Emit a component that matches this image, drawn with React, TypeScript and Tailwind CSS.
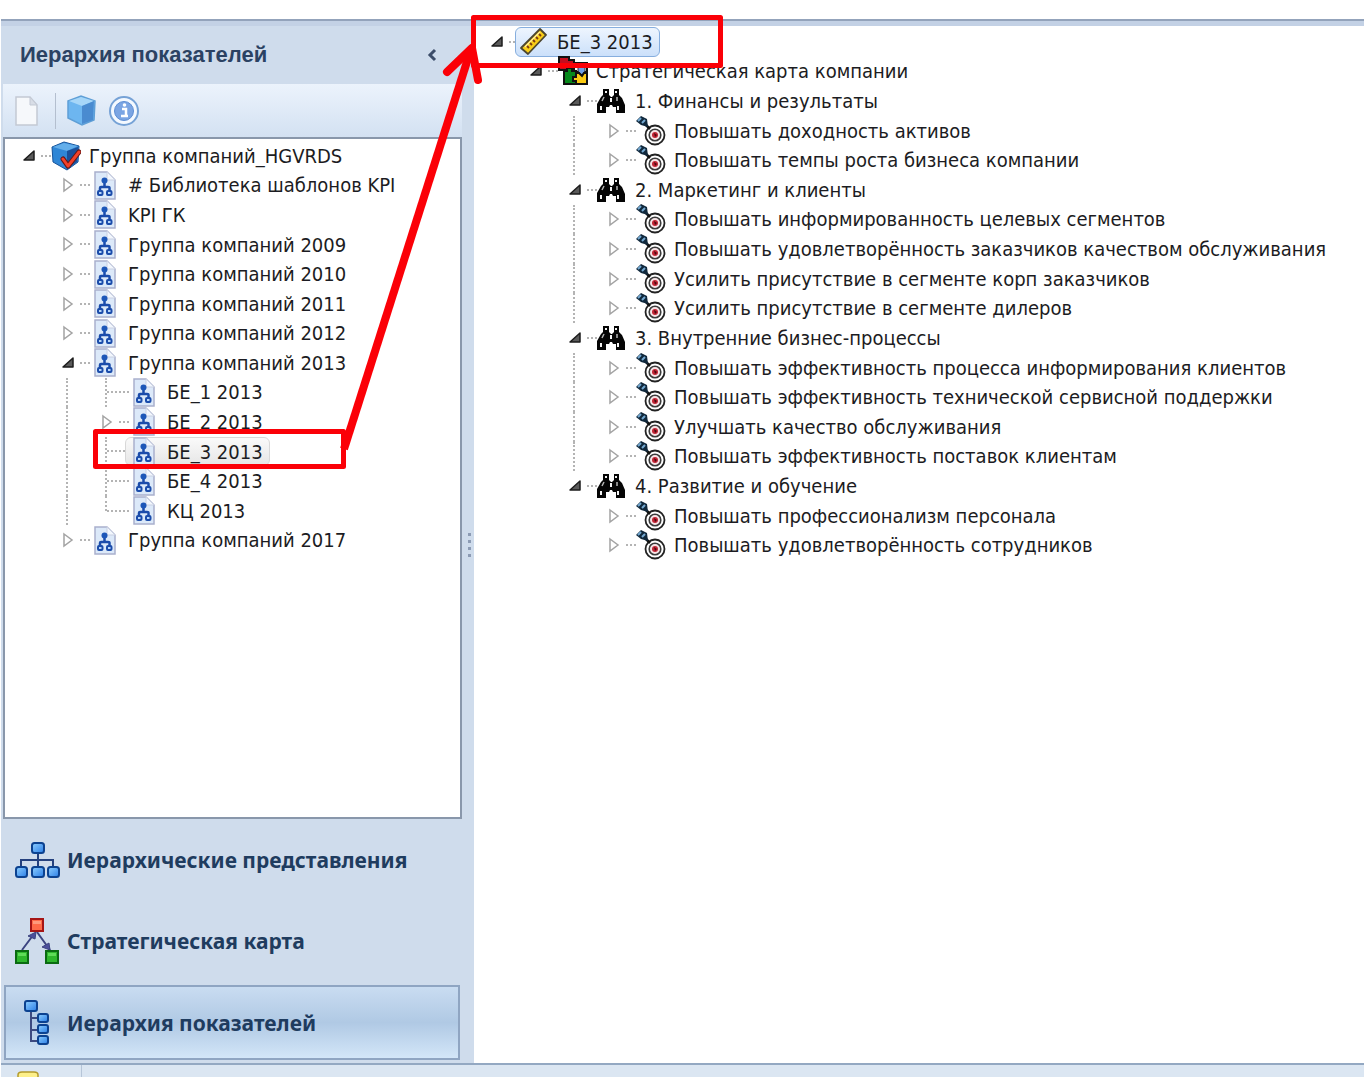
import React, { useState } from 'react';

type IconName = 'group' | 'page' | 'ruler' | 'puzzle' | 'binoculars' | 'target';

interface TreeNode {
  label: string;
  icon: IconName;
  expandable?: boolean;
  open?: boolean;
  children?: TreeNode[];
}

interface Row {
  node: TreeNode;
  guides: boolean[];
  isLast: boolean;
}

const goals = (...labels: string[]): TreeNode[] =>
  labels.map((label) => ({ label, icon: 'target', expandable: true }));

const page = (label: string, expandable = true): TreeNode => ({ label, icon: 'page', expandable });

const COMPANY_TREE: TreeNode = {
  label: 'Группа компаний_HGVRDS',
  icon: 'group',
  open: true,
  children: [
    page('# Библиотека шаблонов KPI'),
    page('KPI ГК'),
    page('Группа компаний 2009'),
    page('Группа компаний 2010'),
    page('Группа компаний 2011'),
    page('Группа компаний 2012'),
    {
      label: 'Группа компаний 2013',
      icon: 'page',
      open: true,
      children: [
        page('БЕ_1 2013', false),
        page('БЕ_2 2013'),
        page('БЕ_3 2013', false),
        page('БЕ_4 2013', false),
        page('КЦ 2013', false),
      ],
    },
    page('Группа компаний 2017'),
  ],
};

const STRATEGY_TREE: TreeNode = {
  label: 'БЕ_3 2013',
  icon: 'ruler',
  open: true,
  children: [
    {
      label: 'Стратегическая карта компании',
      icon: 'puzzle',
      open: true,
      children: [
        {
          label: '1. Финансы и результаты',
          icon: 'binoculars',
          open: true,
          children: goals('Повышать доходность активов', 'Повышать темпы роста бизнеса компании'),
        },
        {
          label: '2. Маркетинг и клиенты',
          icon: 'binoculars',
          open: true,
          children: goals(
            'Повышать информированность целевых сегментов',
            'Повышать удовлетворённость заказчиков качеством обслуживания',
            'Усилить присутствие в сегменте корп заказчиков',
            'Усилить присутствие в сегменте дилеров',
          ),
        },
        {
          label: '3. Внутренние бизнес-процессы',
          icon: 'binoculars',
          open: true,
          children: goals(
            'Повышать эффективность процесса информирования клиентов',
            'Повышать эффективность технической сервисной поддержки',
            'Улучшать качество обслуживания',
            'Повышать эффективность поставок клиентам',
          ),
        },
        {
          label: '4. Развитие и обучение',
          icon: 'binoculars',
          open: true,
          children: goals('Повышать профессионализм персонала', 'Повышать удовлетворённость сотрудников'),
        },
      ],
    },
  ],
};

const GroupIcon = () => (
  <svg width="30" height="30" viewBox="0 0 30 30">
    <path d="M1 6 L13 1 L28 5 L27 21 L16 29 L2 21Z" fill="#2f86d6" stroke="#17549b" strokeWidth="1" />
    <path d="M2 6 L13 2 L27 5 L16 10Z" fill="#63aeea" />
    <path d="M16 10 L27 6 L26 21 L16 28Z" fill="#1b4f99" />
    <path d="M12 18 L17 25 L28 11" fill="none" stroke="#6a1512" strokeWidth="5" strokeLinecap="round" strokeLinejoin="round" />
    <path d="M12 18 L17 25 L28 11" fill="none" stroke="#f2412a" strokeWidth="3" strokeLinecap="round" strokeLinejoin="round" />
  </svg>
);

const PageIcon = () => (
  <svg width="22" height="29" viewBox="0 0 22 29">
    <path d="M1 1 H13 L21 9 V28 H1Z" fill="#dce9f9" stroke="#a9b0cd" strokeWidth="1.5" />
    <path d="M13 1 V9 H21Z" fill="#f3f7fd" stroke="#c9d0e2" />
    <path d="M10.5 10 V16 M6 21 V17 Q6 16 7 16 H14 Q15.500 16 15.500 17 V21" fill="none" stroke="#1b4cab" strokeWidth="2.500" />
    <circle cx="10.500" cy="9.500" r="3" fill="#1d57b8" />
    <g fill="#b5d5fa" stroke="#1b4cab" strokeWidth="2">
      <rect x="4" y="20" width="4.500" height="4" rx="1" />
      <rect x="13" y="20" width="4.500" height="4" rx="1" />
    </g>
  </svg>
);

const RulerIcon = () => (
  <svg width="28" height="28" viewBox="0 0 28 28">
    <path d="M1 20 L20 1 L26 7 L8 26Z" fill="#f8cd18" stroke="#4c4630" strokeWidth="1.800" strokeLinejoin="round" />
    <path d="M5 19 L20 4" stroke="#fff0a0" strokeWidth="1.500" />
    <path d="M7 18 l2 2 M10 15 l2 2 M13 12 l2 2 M16 9 l2 2 M19 6 l2 2" stroke="#7a3b14" strokeWidth="1.800" />
  </svg>
);

const PuzzleIcon = () => (
  <svg width="30" height="30" viewBox="0 0 30 30">
    <path d="M1 1 H11 V4 H16 V14 H1Z" fill="#c40d1e" stroke="#111" strokeWidth="2" />
    <path d="M16 7 H29 V16 H16Z" fill="#fff" stroke="#111" strokeWidth="2" />
    <path d="M20 9 H27 V15 L24 19 L20 15Z" fill="#6d9fe6" stroke="#333" />
    <path d="M6 15 H9 V12 H14 V15 H18 V28 H6Z" fill="#07891c" stroke="#111" strokeWidth="2" />
    <path d="M18 17 H21 L24 20 L26 17 H29 V28 H18 V25 H15 V21 H18Z" fill="#fbcb12" stroke="#111" strokeWidth="2" />
  </svg>
);

const BinocularsIcon = () => (
  <svg width="30" height="26" viewBox="0 0 30 26">
    <path
      d="M6 1 H12 V7 L14 9 H15 L17 7 V1 H22 V7 L25 10 L28 17 V25 H19 V19 H16 L15 17 H13 L12 19 H9 V25 H0 V16 L4 9 L6 7Z"
      fill="#050505"
    />
    <path d="M8 3 H10 V5 H8Z M18 3 H20 V5 H18Z M13 10 H15 V14 H13Z M3 18 H5 V22 H3Z M20 18 H22 V22 H20Z" fill="#f4f4f4" />
    <path d="M7 9 L5 13 M20 9 V13" stroke="#b5b5b5" strokeWidth="1.500" />
  </svg>
);

const TargetIcon = () => (
  <svg width="30" height="30" viewBox="0 0 30 30">
    <circle cx="19" cy="19" r="9.500" fill="#fff" stroke="#222" strokeWidth="1.800" />
    <circle cx="19" cy="19" r="5.800" fill="#f7e4e6" stroke="#3a3a3a" strokeWidth="1.600" />
    <circle cx="19" cy="19" r="3" fill="#c32334" />
    <path d="M18 17 L21 19 L19 21Z" fill="#4a0a10" />
    <path d="M10 9 L14 13" stroke="#111" strokeWidth="2.500" />
    <path d="M0 5 L5 0 L11 3 L12 11 L5 9Z" fill="#10283c" />
    <path d="M2 5 L5 2 M6 7 L9 4" stroke="#74a9d2" strokeWidth="2" />
  </svg>
);

const ICONS: Record<IconName, React.FC> = {
  group: GroupIcon,
  page: PageIcon,
  ruler: RulerIcon,
  puzzle: PuzzleIcon,
  binoculars: BinocularsIcon,
  target: TargetIcon,
};

const flatten = (node: TreeNode, closed: string[], guides: boolean[] = [], isLast = true): Row[] => {
  const rows: Row[] = [{ node, guides, isLast }];
  if (node.children && !closed.includes(node.label)) {
    node.children.forEach((child, i) => {
      rows.push(...flatten(child, closed, [...guides, !isLast], i === node.children!.length - 1));
    });
  }
  return rows;
};

const Arrow = ({ open }: { open: boolean }) => (
  <svg width="13" height="16" viewBox="0 0 13 16">
    {open ? (
      <path d="M11 3 V12 H1Z" fill="#5a5a5a" stroke="#1d1d1d" strokeWidth="1.500" strokeLinejoin="round" />
    ) : (
      <path d="M2 2 L10 8 L2 14Z" fill="#fff" stroke="#a3a3a3" strokeWidth="1.500" />
    )}
  </svg>
);

interface TreeProps {
  root: TreeNode;
  label: string;
  selected: string;
  focused?: boolean;
}

const Tree = ({ root, label, selected, focused }: TreeProps) => {
  const [closed, setClosed] = useState<string[]>([]);
  const rows = flatten(root, closed);

  const toggle = (name: string) =>
    setClosed((list) => (list.includes(name) ? list.filter((n) => n !== name) : [...list, name]));

  return (
    // five rows take 148px
    <ul
      role="tree"
      aria-label={label}
      className="grid auto-rows-fr font-['DejaVu_Sans_Condensed','DejaVu_Sans',sans-serif] text-xl leading-7 text-[#1c1c22]"
      style={{ height: Math.round((rows.length * 148) / 5) }}
    >
      {rows.map(({ node, guides, isLast }) => {
        const Icon = ICONS[node.icon];
        const hasToggle = Boolean(node.children || node.expandable);
        const isOpen = Boolean(node.children) && !closed.includes(node.label);
        const isSelected = node.label === selected;
        return (
          <li key={node.label} role="treeitem" aria-level={guides.length + 1} aria-selected={isSelected} className="flex min-h-0 items-stretch whitespace-nowrap">
            {guides.map((line, i) => (
              <span key={i} className="w-[39px] shrink-0 pl-1">
                {line && <span className="block h-full border-l-2 border-dotted border-[#b4b4b4]" />}
              </span>
            ))}
            {hasToggle ? (
              <>
                <button type="button" aria-label={node.label} className="flex w-[18px] shrink-0 items-center" onClick={() => toggle(node.label)}>
                  <Arrow open={isOpen} />
                </button>
                <span className="w-[10px] shrink-0 self-center border-t-2 border-dotted border-[#b4b4b4]" />
              </>
            ) : (
              <span className="flex w-[28px] shrink-0 pl-1">
                <span className={`border-l-2 border-dotted border-[#b4b4b4] ${isLast ? 'h-1/2' : 'h-full'}`} />
                <span className="grow self-center border-t-2 border-dotted border-[#b4b4b4]" />
              </span>
            )}
            <span
              className={`-ml-1 flex items-center rounded-md border pl-[3px] pr-1.5 ${
                !isSelected
                  ? 'border-transparent'
                  : focused
                    ? 'border-[#86aede] bg-linear-to-b from-[#eef5fe] to-[#cbe0fa]'
                    : 'border-[#d8d8d8] bg-linear-to-b from-[#fafafa] to-[#e6e6e6]'
              }`}
            >
              <span className="mr-2 flex h-7 w-[30px] shrink-0 items-center justify-center">
                <Icon />
              </span>
              {node.label}
            </span>
          </li>
        );
      })}
    </ul>
  );
};

const BlueGradient = () => (
  <linearGradient id="nodeBlue" x1="0" y1="0" x2="1" y2="1">
    <stop offset="0" stopColor="#8fd0ff" />
    <stop offset="1" stopColor="#2a7de6" />
  </linearGradient>
);

const OrgIcon = () => (
  <svg width="46" height="36" viewBox="0 0 46 36">
    <defs><BlueGradient /></defs>
    <path d="M23 10 V25 M6 25 V18 H38 V25" fill="none" stroke="#25417e" strokeWidth="2" />
    <g fill="url(#nodeBlue)" stroke="#0c4290" strokeWidth="2">
      <rect x="17" y="1" width="12" height="10" rx="2.500" />
      <rect x="1" y="25" width="11" height="10" rx="2.500" />
      <rect x="17" y="25" width="12" height="10" rx="2.500" />
      <rect x="33" y="25" width="11" height="10" rx="2.500" />
    </g>
  </svg>
);

const MapIcon = () => (
  <svg width="46" height="46" viewBox="0 0 46 46">
    <path d="M7 32 L19 16 M22 14 L35 32" stroke="#3c4480" strokeWidth="2" />
    <path d="M13 18 L21 14 L20 21Z M34 25 L35 32 L27 29Z" fill="#4c4f9c" stroke="#3c4480" />
    <rect x="16" y="1" width="12" height="12" fill="#ff6a48" stroke="#a51515" strokeWidth="2" />
    <path d="M18 3 H26 V6 H18Z" fill="#ff9a7c" />
    <rect x="1" y="33" width="12" height="12" fill="#2fb82c" stroke="#0b6b12" strokeWidth="2" />
    <path d="M3 35 H11 V38 H3Z" fill="#5fdc58" />
    <rect x="31" y="33" width="12" height="12" fill="#2fb82c" stroke="#0b6b12" strokeWidth="2" />
    <path d="M33 35 H41 V38 H33Z" fill="#5fdc58" />
  </svg>
);

const HierarchyIcon = () => (
  <svg width="46" height="46" viewBox="0 0 46 46">
    <path d="M16 10 V41 H24 M16 18 H24 M16 30 H24" fill="none" stroke="#3c4a80" strokeWidth="2" />
    <g fill="url(#nodeBlue)" stroke="#0c4290" strokeWidth="2">
      <rect x="10" y="1" width="12" height="10" rx="2" />
      <rect x="23" y="14" width="10" height="8" rx="2" />
      <rect x="23" y="25" width="10" height="8" rx="2" />
      <rect x="23" y="36" width="10" height="8" rx="2" />
    </g>
  </svg>
);

const VIEWS = [
  { label: 'Иерархические представления', Icon: OrgIcon },
  { label: 'Стратегическая карта', Icon: MapIcon },
  { label: 'Иерархия показателей', Icon: HierarchyIcon },
];

const Toolbar = () => (
  <div className="flex h-[53px] shrink-0 items-center bg-linear-to-b from-[#ecf3fc] to-[#d3e1f2] pl-3">
    <button type="button" aria-label="Создать" disabled>
      <svg width="24" height="32" viewBox="0 0 24 32">
        <path d="M1 2 H15 L22 10 V30 H1Z" fill="#f6f8fb" stroke="#c3c9d4" strokeWidth="1.500" />
        <path d="M15 2 V10 H22Z" fill="#d8dde6" stroke="#c3c9d4" />
      </svg>
    </button>
    <span className="ml-4 h-9 w-px bg-[#b4bfcf]" />
    <button type="button" aria-label="Куб" className="ml-2.5">
      <svg width="30" height="32" viewBox="0 0 30 32">
        <path d="M2 6 L15 1 L29 6 L28 25 L16 30 L2 23Z" fill="#6db6f0" stroke="#5f9fd6" strokeWidth="1.500" />
        <path d="M3 6 L15 2 L28 6 L16 11Z" fill="#a6d6f8" />
        <path d="M16 11 L28 6 L27 25 L16 29Z" fill="#4a8bd0" />
      </svg>
    </button>
    <button type="button" aria-label="Сведения" className="ml-3">
      <svg width="32" height="32" viewBox="0 0 32 32">
        <circle cx="16" cy="16" r="14" fill="#f4f9ff" stroke="#76a2d6" strokeWidth="2" />
        <circle cx="16" cy="16" r="9.500" fill="#7ba5e3" stroke="#5d8ed4" />
        <path d="M14 14 H18 V21 M13 21 H20" fill="none" stroke="#fff" strokeWidth="2.500" />
        <circle cx="16.500" cy="10" r="1.800" fill="#fff" />
      </svg>
    </button>
  </div>
);

const Sidebar = () => {
  const [active, setActive] = useState('Иерархия показателей');

  return (
    <aside className="flex w-[473px] shrink-0 bg-[#cfdcec] pl-0.5">
      <div className="flex min-w-0 flex-1 flex-col">
        <header className="flex h-[58px] shrink-0 items-center justify-between pl-[17px] pr-6">
          <h1 className="font-['Liberation_Sans',Arial,sans-serif] text-[22px] font-bold leading-7 text-[#2b4263]">Иерархия показателей</h1>
          <button type="button" aria-label="Свернуть панель">
            <svg width="12" height="16" viewBox="0 0 12 16">
              <path d="M9 3 L4 8 L9 13" fill="none" stroke="#3c4d69" strokeWidth="3" />
            </svg>
          </button>
        </header>
        <Toolbar />
        <div className="flex-1 overflow-hidden border-2 border-[#8997ab] bg-white pl-[18px] pt-0.5">
          <Tree root={COMPANY_TREE} label="Иерархия показателей" selected="БЕ_3 2013" />
        </div>
        <nav className="flex flex-col pb-[3px]">
          {VIEWS.map(({ label, Icon }) => (
            <button
              key={label}
              type="button"
              onClick={() => setActive(label)}
              className={`ml-px mr-0.5 flex items-center gap-1.5 border-2 pl-[9px] text-left font-['Noto_Sans',sans-serif] text-[21px] font-bold leading-7 text-[#1f3c5f] ${
                active === label
                  ? 'mt-1 h-[75px] border-[#8fa5c2] bg-linear-to-b from-[#c9dcf1] via-[#b0c9e4] to-[#d3e6f8]'
                  : 'h-[81px] border-transparent'
              }`}
            >
              <Icon />
              {label}
            </button>
          ))}
        </nav>
      </div>
      <div className="flex w-3 shrink-0 items-center justify-center">
        <svg width="8" height="30" viewBox="0 0 8 30" aria-hidden="true">
          <path d="M4 3 h3 v3 h-3z M4 10 h3 v3 h-3z M4 17 h3 v3 h-3z M4 24 h3 v3 h-3z" fill="#8c9bb4" />
        </svg>
      </div>
    </aside>
  );
};

// red marks over both trees, tying the chosen unit to its card
const Callouts = () => (
  <svg className="pointer-events-none absolute left-0 top-0" width="740" height="480" viewBox="0 0 740 480" fill="none" stroke="#fb0007" aria-hidden="true">
    <rect x="95.500" y="431.500" width="248" height="35" strokeWidth="5" strokeLinejoin="round" />
    <rect x="473.500" y="17.500" width="247" height="48" strokeWidth="5" strokeLinejoin="round" />
    <path d="M344 449 L471 49" strokeWidth="8" />
    <path d="M447 72 L472 48 L478 80" strokeWidth="8" strokeLinecap="round" strokeLinejoin="round" />
  </svg>
);

export default function App() {
  return (
    <div className="relative flex min-h-screen flex-col bg-white px-px pt-[19px]">
      <div className="h-[7px] shrink-0 border-t-2 border-[#93a3bb] bg-[#c3d1e5]" />
      <div className="flex flex-1">
        <Sidebar />
        <main className="min-w-0 flex-1 overflow-hidden pl-[17px] pt-px">
          <Tree root={STRATEGY_TREE} label="Стратегическая карта" selected="БЕ_3 2013" focused />
        </main>
      </div>
      <footer className="flex h-[14px] shrink-0 items-end overflow-hidden border-t-2 border-[#93a8c2] bg-[#dbe6f2] pl-4">
        <svg width="22" height="6" viewBox="0 0 22 6" aria-hidden="true">
          <path d="M1 8 V4 Q1 1 5 1 H17 Q21 1 21 4 V8Z" fill="#fdf08a" stroke="#b49b2c" strokeWidth="1.500" />
        </svg>
        <span className="ml-[42px] h-full w-px bg-[#b6c5d8]" />
      </footer>
      <Callouts />
    </div>
  );
}
